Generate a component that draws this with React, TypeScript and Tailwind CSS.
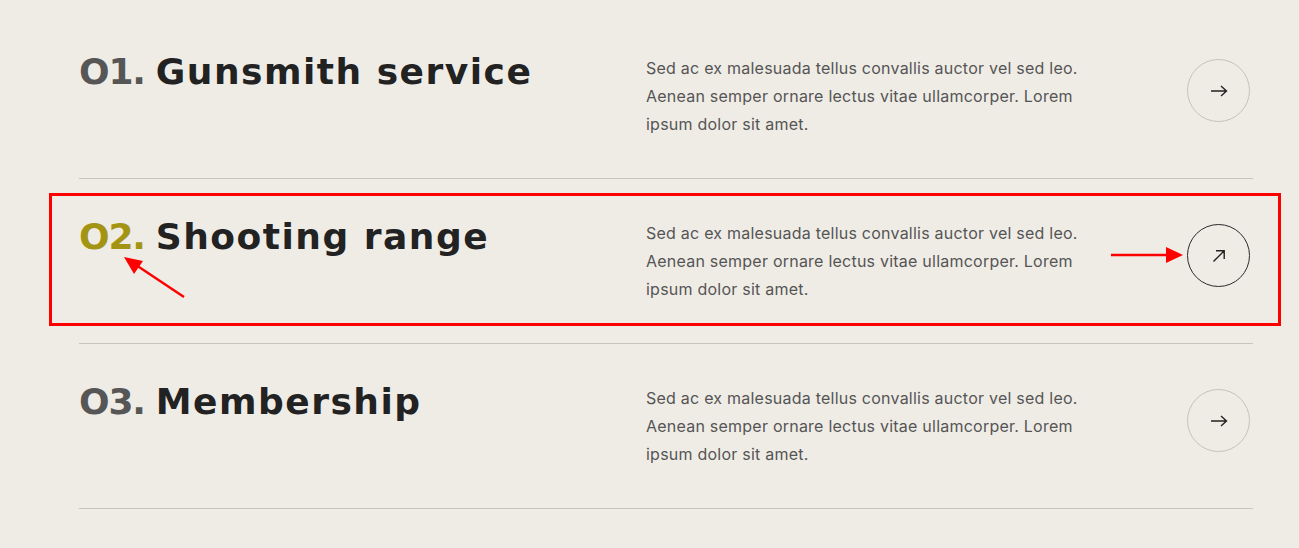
import { ReactNode } from 'react';

type Service = {
  num: string;
  title: string;
  active?: boolean;
};

const services: Service[] = [
  { num: 'O1.', title: 'Gunsmith service' },
  { num: 'O2.', title: 'Shooting range', active: true },
  { num: 'O3.', title: 'Membership' },
];

const ArrowRight = () => (
  <svg width="18" height="12" viewBox="0 0 18 12" fill="none" stroke="#222" strokeWidth="1.4">
    <path d="M1 6h15.5M11 1l5.5 5-5.5 5" />
  </svg>
);

const ArrowUpRight = () => (
  <svg width="14" height="14" viewBox="0 0 14 14" fill="none" stroke="#222" strokeWidth="1.4">
    <path d="M1.5 12.5l10.5-10.5M4 1.8h8.2V10" />
  </svg>
);

const CircleButton = ({ active, children }: { active?: boolean; children: ReactNode }) => (
  <div
    className={`flex items-center justify-center w-[63px] h-[63px] rounded-full border mt-[5px] mr-[3px] ${
      active ? 'border-[#2a2a2a]' : 'border-[#c7c2ba]'
    }`}
  >
    {children}
  </div>
);

const ServiceRow = ({ service }: { service: Service }) => (
  <div className="flex flex-row items-start justify-between pt-10 pb-10 border-b border-[#c9c4bc]">
    <div className="w-[567px] shrink-0">
      <h2 className="flex flex-row items-baseline gap-[11px] text-[36px] leading-none font-bold font-['DejaVu_Sans',sans-serif] text-[#222] whitespace-nowrap">
        <span
          className={`tracking-[-1.2px] ${service.active ? 'text-[#a39413]' : 'text-[#565656]'}`}
        >
          {service.num}
        </span>
        <span className="tracking-[1.5px]">{service.title}</span>
      </h2>
    </div>
    <p className="w-[445px] text-[16px] leading-[28px] tracking-[0.23px] text-[#555] font-['Inter',sans-serif]">
      Sed ac ex malesuada tellus convallis auctor vel sed leo. Aenean semper ornare lectus vitae
      ullamcorper. Lorem ipsum dolor sit amet.
    </p>
    <div className="flex-1 flex justify-end">
      <CircleButton active={service.active}>
        {service.active ? <ArrowUpRight /> : <ArrowRight />}
      </CircleButton>
    </div>
  </div>
);

export default function App() {
  return (
    <div className="relative w-[1299px] h-[548px] bg-[#efece6] overflow-hidden">
      <div className="pt-[14px] pl-[79px] w-[1253px]">
        {services.map((s) => (
          <ServiceRow key={s.num} service={s} />
        ))}
      </div>

      {/* annotation overlay */}
      <div className="absolute left-[49px] top-[193px] w-[1232px] h-[133px] border-[3px] border-[#ff0000] pointer-events-none" />
      <svg className="absolute left-0 top-0 pointer-events-none" width="1299" height="548">
        <line x1="184" y1="297" x2="136" y2="265" stroke="#ff0000" strokeWidth="2.5" />
        <polygon points="124,257 143,261 134,274" fill="#ff0000" />
        <line x1="1111" y1="255" x2="1168" y2="255" stroke="#ff0000" strokeWidth="2.5" />
        <polygon points="1183,255 1166,247 1166,263" fill="#ff0000" />
      </svg>
    </div>
  );
}
